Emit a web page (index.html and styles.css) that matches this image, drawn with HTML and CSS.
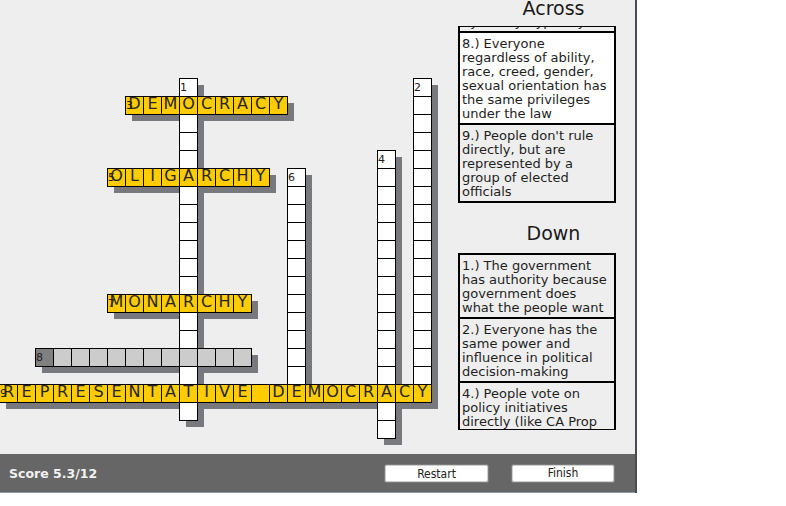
FILE: index.html
```html
<!DOCTYPE html>
<html lang="en">
<head>
<meta charset="utf-8">
<title>Crossword</title>
<link rel="stylesheet" href="styles.css">
</head>
<body>
<div class="app">
  <div class="main">
    <div class="board">
      <div class="grid">
        <div class="shadow d1"></div>
        <div class="shadow d2"></div>
        <div class="shadow d4"></div>
        <div class="shadow d6"></div>
        <div class="shadow a3"></div>
        <div class="shadow a5"></div>
        <div class="shadow a7"></div>
        <div class="shadow a8"></div>
        <div class="shadow a9"></div>

        <div class="word down d1">
          <div class="c"><span class="n">1</span></div><div class="c"></div><div class="c"></div><div class="c"></div><div class="c"></div><div class="c"></div><div class="c"></div><div class="c"></div><div class="c"></div><div class="c"></div><div class="c"></div><div class="c"></div><div class="c"></div><div class="c"></div><div class="c"></div><div class="c"></div><div class="c"></div><div class="c"></div><div class="c"></div>
        </div>
        <div class="word down d2">
          <div class="c"><span class="n">2</span></div><div class="c"></div><div class="c"></div><div class="c"></div><div class="c"></div><div class="c"></div><div class="c"></div><div class="c"></div><div class="c"></div><div class="c"></div><div class="c"></div><div class="c"></div><div class="c"></div><div class="c"></div><div class="c"></div><div class="c"></div><div class="c"></div><div class="c"></div>
        </div>
        <div class="word down d4">
          <div class="c"><span class="n">4</span></div><div class="c"></div><div class="c"></div><div class="c"></div><div class="c"></div><div class="c"></div><div class="c"></div><div class="c"></div><div class="c"></div><div class="c"></div><div class="c"></div><div class="c"></div><div class="c"></div><div class="c"></div><div class="c"></div><div class="c"></div>
        </div>
        <div class="word down d6">
          <div class="c"><span class="n">6</span></div><div class="c"></div><div class="c"></div><div class="c"></div><div class="c"></div><div class="c"></div><div class="c"></div><div class="c"></div><div class="c"></div><div class="c"></div><div class="c"></div><div class="c"></div><div class="c"></div>
        </div>

        <div class="word across a3">
          <div class="c y"><span class="n">3</span>D</div><div class="c y">E</div><div class="c y">M</div><div class="c y">O</div><div class="c y">C</div><div class="c y">R</div><div class="c y">A</div><div class="c y">C</div><div class="c y">Y</div>
        </div>
        <div class="word across a5">
          <div class="c y"><span class="n">5</span>O</div><div class="c y">L</div><div class="c y">I</div><div class="c y">G</div><div class="c y">A</div><div class="c y">R</div><div class="c y">C</div><div class="c y">H</div><div class="c y">Y</div>
        </div>
        <div class="word across a7">
          <div class="c y"><span class="n">7</span>M</div><div class="c y">O</div><div class="c y">N</div><div class="c y">A</div><div class="c y">R</div><div class="c y">C</div><div class="c y">H</div><div class="c y">Y</div>
        </div>
        <div class="word across a8">
          <div class="c sel"><span class="n">8</span></div><div class="c g"></div><div class="c g"></div><div class="c g"></div><div class="c g"></div><div class="c g"></div><div class="c g"></div><div class="c g"></div><div class="c g"></div><div class="c g"></div><div class="c g"></div><div class="c g"></div>
        </div>
        <div class="word across a9">
          <div class="c y"><span class="n">9</span>R</div><div class="c y">E</div><div class="c y">P</div><div class="c y">R</div><div class="c y">E</div><div class="c y">S</div><div class="c y">E</div><div class="c y">N</div><div class="c y">T</div><div class="c y">A</div><div class="c y">T</div><div class="c y">I</div><div class="c y">V</div><div class="c y">E</div><div class="c y"></div><div class="c y">D</div><div class="c y">E</div><div class="c y">M</div><div class="c y">O</div><div class="c y">C</div><div class="c y">R</div><div class="c y">A</div><div class="c y">C</div><div class="c y">Y</div>
        </div>
      </div>
    </div>

    <div class="panel">
      <div class="heading heading-across">Across</div>
      <div class="clues clues-across">
        <div class="clue">7.) Ruled by a king, queen or emperor; power passes down by family, typically</div>
        <div class="clue active">8.) Everyone regardless of ability, race, creed, gender, sexual orientation has the same privileges under the law</div>
        <div class="clue">9.) People don't rule directly, but are represented by a group of elected officials</div>
      </div>
      <div class="heading heading-down">Down</div>
      <div class="clues">
        <div class="clue">1.) The government has authority because government does what the people want</div>
        <div class="clue">2.) Everyone has the same power and influence in political decision-making</div>
        <div class="clue">4.) People vote on policy initiatives directly (like CA Prop 13)</div>
      </div>
    </div>
  </div>

  <div class="bar">
    <div class="score">Score 5.3/12</div>
    <div class="btn">Restart</div>
    <div class="btn btn-finish">Finish</div>
  </div>
</div>
</body>
</html>
```

FILE: styles.css
```css
html, body {
  margin: 0;
  padding: 0;
  background: #ffffff;
}

.app {
  width: 635px;
  border-right: 2px solid #4b4b52;
  background: #eeeeee;
  font-family: "DejaVu Sans", Verdana, sans-serif;
  color: #222222;
}

.main {
  display: flex;
  height: 454px;
  overflow: hidden;
}

/* ---------- board ---------- */
.board {
  width: 458px;
  flex: none;
}

.grid {
  display: grid;
  grid-template-columns: repeat(24, 18px);
  grid-template-rows: repeat(20, 18px);
  margin: 78px 0 0 -1px;
}

.d1 { grid-area: 1 / 11 / span 19 / span 1; }
.d2 { grid-area: 1 / 24 / span 18 / span 1; }
.d4 { grid-area: 5 / 22 / span 16 / span 1; }
.d6 { grid-area: 6 / 17 / span 13 / span 1; }
.a3 { grid-area: 2 / 8 / span 1 / span 9; }
.a5 { grid-area: 6 / 7 / span 1 / span 9; }
.a7 { grid-area: 13 / 7 / span 1 / span 8; }
.a8 { grid-area: 16 / 3 / span 1 / span 12; }
.a9 { grid-area: 18 / 1 / span 1 / span 24; }

.shadow {
  box-shadow: 7px 7px 0 0 #78787f;
}

.word {
  display: flex;
  justify-self: start;
  align-self: start;
  border-left: 1px solid #000;
  border-top: 1px solid #000;
}

.word.down {
  flex-direction: column;
}

.c {
  position: relative;
  width: 17px;
  height: 17px;
  border-right: 1px solid #000;
  border-bottom: 1px solid #000;
  background: #ffffff;
  font-size: 16px;
  line-height: 13px;
  text-align: center;
  color: #262626;
}

.c.y { background: #ffcc00; }
.c.g { background: #cccccc; }
.c.sel { background: #808080; }

.n {
  position: absolute;
  left: 0;
  top: 3px;
  font-size: 11px;
  line-height: 11px;
  color: #222;
}

/* ---------- clue panel ---------- */
.panel {
  display: flex;
  flex-direction: column;
  flex: none;
  width: 177px;
}

.heading {
  width: 158px;
  box-sizing: border-box;
  padding-left: 33px;
  text-align: center;
  font-size: 19px;
  line-height: 24px;
  color: #1a1a1a;
}

.heading-across { margin: -4px 0 6px; }
.heading-down { margin: 18px 0 8px; }

.clues {
  width: 158px;
  height: 177px;
  box-sizing: border-box;
  border: 1px solid #000;
  overflow: hidden;
  display: flex;
  flex-direction: column;
  flex: none;
}

.clues-across {
  justify-content: flex-end;
}

.clue {
  flex: none;
  border: 1px solid #000;
  padding: 4px 4px 2px 2px;
  font-size: 13px;
  line-height: 14px;
  color: #1e1e1e;
  background: #eeeeee;
}

.clue.active {
  background: #ffffff;
}

/* ---------- bottom bar ---------- */
.bar {
  display: flex;
  align-items: center;
  gap: 22px;
  height: 38px;
  padding: 0 20px 0 9px;
  background: #666666;
  border-bottom: 1px solid #8f99a6;
}

.score {
  flex: 1;
  font-weight: bold;
  font-size: 12.5px;
  color: #f2f2f2;
}

.btn {
  width: 105px;
  height: 19px;
  box-sizing: border-box;
  border: 1px solid #7a7a7a;
  border-radius: 3px;
  box-shadow: inset 0 0 0 1px #cfcfcf;
  background: #ffffff;
  font-family: "DejaVu Sans Condensed", "DejaVu Sans", sans-serif;
  font-stretch: condensed;
  font-size: 12px;
  line-height: 18px;
  text-align: center;
  color: #222;
}

.btn-finish {
  width: 104px;
  line-height: 16px;
}
```
